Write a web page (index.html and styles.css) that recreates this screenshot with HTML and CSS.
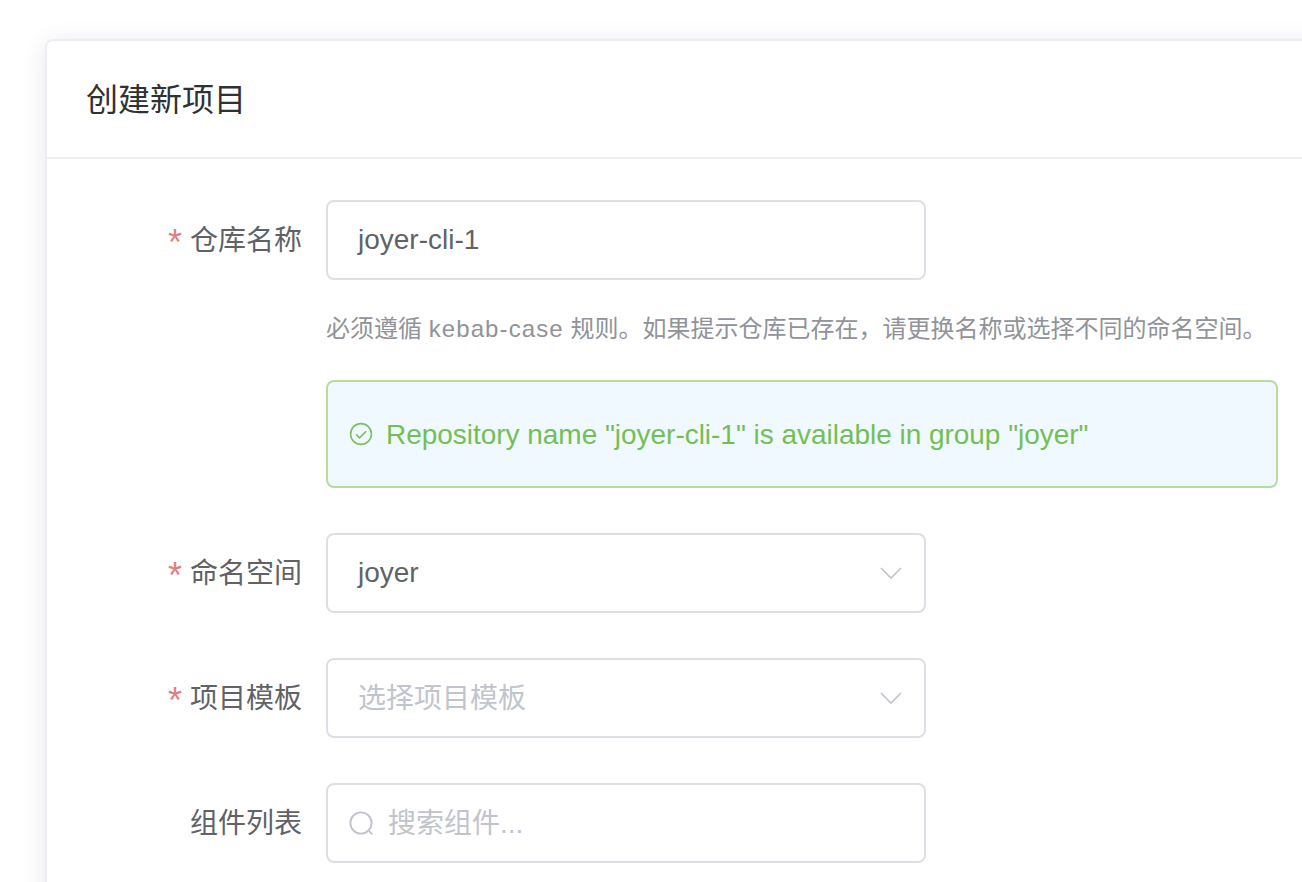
FILE: index.html
```html
<!DOCTYPE html>
<html lang="zh-CN">
<head>
  <meta charset="UTF-8" />
  <title>创建新项目</title>
  <link rel="stylesheet" href="styles.css">
</head>
<body>

  <div class="card">
    <div class="card-header">创建新项目</div>
    <div class="card-body">

      <div class="form-item">
        <label class="form-label required">仓库名称</label>
        <div class="form-content">
          <div class="input"><span class="input-value">joyer-cli-1</span></div>
          <p class="hint">必须遵循 <span class="hint-code">kebab-case</span> 规则。如果提示仓库已存在，请更换名称或选择不同的命名空间。</p>
          <div class="alert">
            <svg class="alert-icon" viewBox="0 0 24 24" fill="none" stroke="#7cc05f" stroke-width="1.6">
              <circle cx="12" cy="12" r="10.4"/>
              <path d="M7 12.2l3.6 3.6 6.6-6.6"/>
            </svg>
            <span class="alert-text">Repository name "joyer-cli-1" is available in group "joyer"</span>
          </div>
        </div>
      </div>

      <div class="form-item">
        <label class="form-label required">命名空间</label>
        <div class="form-content">
          <div class="input">
            <span class="input-value">joyer</span>
            <svg class="arrow" viewBox="0 0 22 14" fill="none" stroke="#c0c4cc" stroke-width="1.6"><path d="M1 2l10 10L21 2"/></svg>
          </div>
        </div>
      </div>

      <div class="form-item">
        <label class="form-label required">项目模板</label>
        <div class="form-content">
          <div class="input">
            <span class="placeholder">选择项目模板</span>
            <svg class="arrow" viewBox="0 0 22 14" fill="none" stroke="#c0c4cc" stroke-width="1.6"><path d="M1 2l10 10L21 2"/></svg>
          </div>
        </div>
      </div>

      <div class="form-item">
        <label class="form-label">组件列表</label>
        <div class="form-content">
          <div class="input input-search">
            <svg class="search-icon" viewBox="0 0 24 24" fill="none" stroke="#c0c4cc" stroke-width="1.8">
              <circle cx="11.5" cy="11.5" r="10.2"/>
              <path d="M19 19l3.5 3.5"/>
            </svg>
            <span class="placeholder">搜索组件...</span>
          </div>
        </div>
      </div>

    </div>
  </div>

</body>
</html>
```

FILE: styles.css
```css
body {
  margin: 0;
  height: 882px;
  overflow: hidden;
  background: #fff;
  font-family: "Liberation Sans", "Noto Sans CJK SC", sans-serif;
  padding: 39px 0 0 45px;
  box-sizing: border-box;
}

.card {
  width: 1400px;
  height: 1200px;
  box-sizing: border-box;
  background: #fff;
  border: 2px solid #ebeef5;
  border-radius: 8px;
  box-shadow: 0 4px 24px rgba(0, 0, 0, 0.1);
}

.card-header {
  height: 116px;
  line-height: 118px;
  padding-left: 39px;
  font-size: 32px;
  color: #303133;
  border-bottom: 2px solid #ebeef5;
}

.card-body {
  display: flex;
  flex-direction: column;
  gap: 45px;
  padding-top: 41px;
}

.form-item {
  display: flex;
}

.form-label {
  width: 255px;
  height: 80px;
  line-height: 82px;
  text-align: right;
  font-size: 28px;
  color: #606266;
  flex-shrink: 0;
}

.required::before {
  content: "*";
  color: #e57f7f;
  font-size: 36px;
  line-height: 0;
  vertical-align: -5px;
  margin-right: 8px;
}

.form-content {
  margin-left: 24px;
  width: 952px;
}

.input {
  width: 600px;
  height: 80px;
  box-sizing: border-box;
  border: 2px solid #dcdfe6;
  border-radius: 8px;
  padding: 0 22px 0 30px;
  display: flex;
  align-items: center;
  justify-content: space-between;
  font-size: 28px;
  color: #606266;
}

.placeholder {
  color: #c0c4cc;
  padding-bottom: 4px;
}

.input-search {
  justify-content: flex-start;
  padding-left: 21px;
}

.arrow {
  width: 22px;
  height: 14px;
}

.search-icon {
  width: 25px;
  height: 25px;
  margin-right: 14px;
}

.hint {
  margin: 0;
  padding-top: 32px;
  height: 68px;
  box-sizing: border-box;
  line-height: 34px;
  font-size: 24px;
  color: #909399;
  white-space: nowrap;
}

.hint-code {
  letter-spacing: 1.1px;
}

.alert {
  margin-top: 32px;
  height: 108px;
  box-sizing: border-box;
  display: flex;
  align-items: center;
  gap: 13px;
  padding-left: 21px;
  background: #f0f9ff;
  border: 2px solid #b5dd9f;
  border-radius: 8px;
  font-size: 28px;
  color: #74bf55;
}

.alert-icon {
  width: 24px;
  height: 24px;
  flex-shrink: 0;
}

.alert-text {
  padding-top: 2px;
  letter-spacing: -0.03px;
}
```
